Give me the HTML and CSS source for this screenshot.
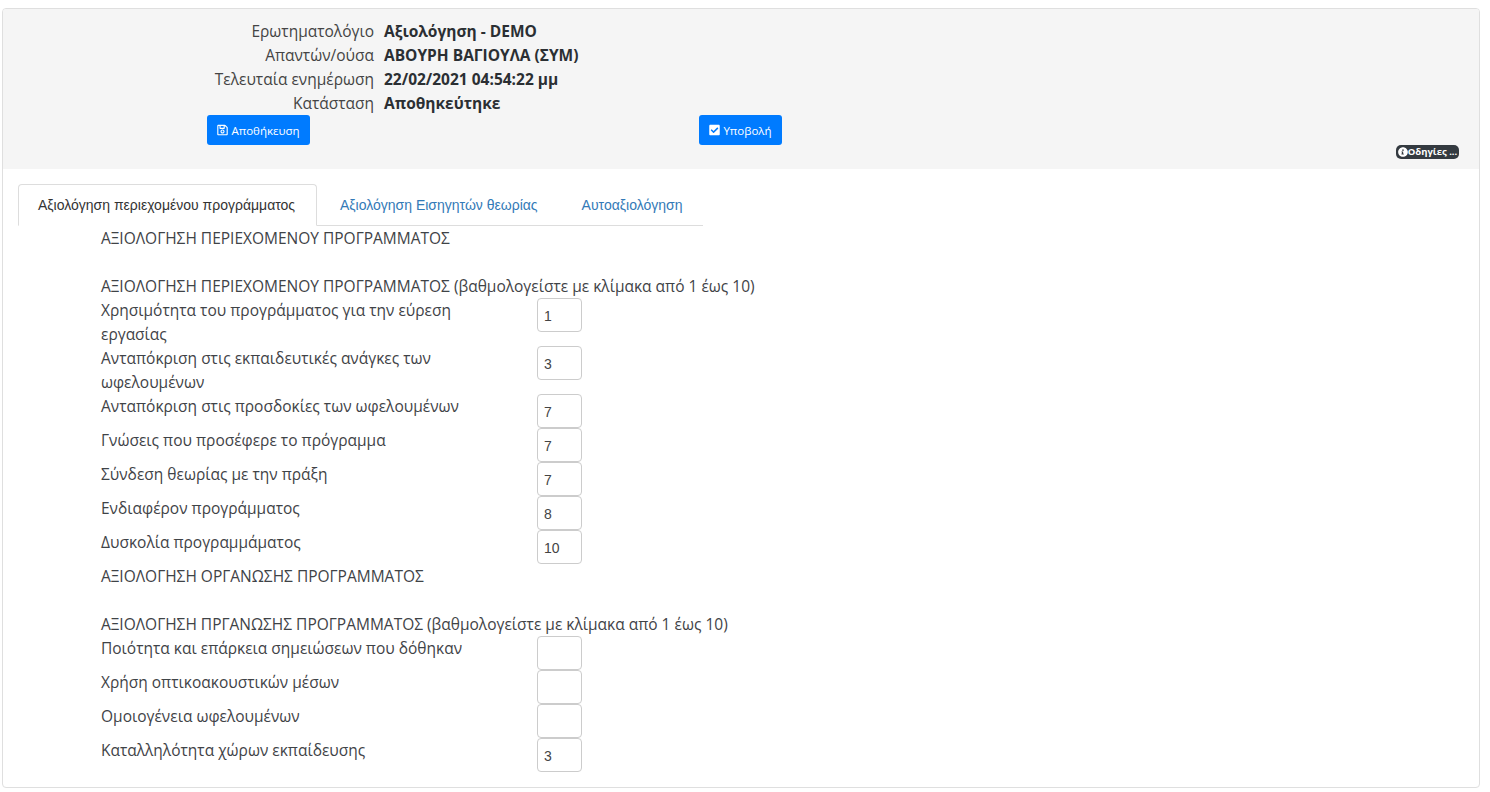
FILE: index.html
```html
<!DOCTYPE html>
<html lang="el">
<head>
<meta charset="utf-8">
<title>Αξιολόγηση</title>
<link rel="stylesheet" href="styles.css">
</head>
<body>
<div class="card">
  <header class="head">
    <dl class="info">
      <dt>Ερωτηματολόγιο</dt><dd>Αξιολόγηση - DEMO</dd>
      <dt>Απαντών/ούσα</dt><dd>ΑΒΟΥΡΗ ΒΑΓΙΟΥΛΑ (ΣΥΜ)</dd>
      <dt>Τελευταία ενημέρωση</dt><dd>22/02/2021 04:54:22 μμ</dd>
      <dt>Κατάσταση</dt><dd>Αποθηκεύτηκε</dd>
    </dl>
    <div class="actions">
      <button class="btn btn-save" type="button"><svg class="ico" viewBox="0 0 448 512"><path fill="currentColor" d="M433.941 129.941l-83.882-83.882A48 48 0 0 0 316.118 32H48C21.49 32 0 53.49 0 80v352c0 26.51 21.49 48 48 48h352c26.51 0 48-21.49 48-48V163.882a48 48 0 0 0-14.059-33.941zM272 80v80H144V80h128zm122 352H54a6 6 0 0 1-6-6V86a6 6 0 0 1 6-6h42v104c0 13.255 10.745 24 24 24h176c13.255 0 24-10.745 24-24V83.882l78.243 78.243a6 6 0 0 1 1.757 4.243V426a6 6 0 0 1-6 6zM224 232c-48.523 0-88 39.477-88 88s39.477 88 88 88 88-39.477 88-88-39.477-88-88-88zm0 128c-22.056 0-40-17.944-40-40s17.944-40 40-40 40 17.944 40 40-17.944 40-40 40z"/></svg>Αποθήκευση</button>
      <button class="btn btn-submit" type="button"><svg class="ico" viewBox="0 0 448 512"><path fill="currentColor" d="M400 480H48c-26.51 0-48-21.49-48-48V80c0-26.51 21.49-48 48-48h352c26.51 0 48 21.49 48 48v352c0 26.51-21.49 48-48 48zm-204.686-98.059l184-184c6.248-6.248 6.248-16.379 0-22.627l-22.627-22.627c-6.248-6.248-16.379-6.249-22.628 0L184 302.745l-70.059-70.059c-6.248-6.248-16.379-6.248-22.628 0l-22.627 22.627c-6.248 6.248-6.248 16.379 0 22.627l104 104c6.249 6.25 16.379 6.25 22.628.001z"/></svg>Υποβολή</button>
    </div>
    <div class="help"><span class="badge"><svg class="ico-i" viewBox="0 0 512 512"><path fill="currentColor" d="M256 8C119.043 8 8 119.083 8 256c0 136.997 111.043 248 248 248s248-111.003 248-248C504 119.083 392.957 8 256 8zm0 110c23.196 0 42 18.804 42 42s-18.804 42-42 42-42-18.804-42-42 18.804-42 42-42zm56 254c0 6.627-5.373 12-12 12h-112c-6.627 0-12-5.373-12-12v-24c0-6.627 5.373-12 12-12h12v-64h-12c-6.627 0-12-5.373-12-12v-24c0-6.627 5.373-12 12-12h64c6.627 0 12 5.373 12 12v100h12c6.627 0 12 5.373 12 12v24z"/></svg>Οδηγίες ...</span></div>
  </header>
  <div class="body">
    <nav class="tabs">
      <a class="tab tab-active">Αξιολόγηση περιεχομένου προγράμματος</a>
      <a class="tab tab-2">Αξιολόγηση Εισηγητών θεωρίας</a>
      <a class="tab tab-3">Αυτοαξιολόγηση</a>
    </nav>
    <section class="form">
      <p class="title">ΑΞΙΟΛΟΓΗΣΗ ΠΕΡΙΕΧΟΜΕΝΟΥ ΠΡΟΓΡΑΜΜΑΤΟΣ</p>
      <p class="title spaced">ΑΞΙΟΛΟΓΗΣΗ ΠΕΡΙΕΧΟΜΕΝΟΥ ΠΡΟΓΡΑΜΜΑΤΟΣ (βαθμολογείστε με κλίμακα από 1 έως 10)</p>
      <div class="row"><label class="lbl">Χρησιμότητα του προγράμματος για την εύρεση εργασίας</label><input class="num" value="1"></div>
      <div class="row"><label class="lbl">Ανταπόκριση στις εκπαιδευτικές ανάγκες των ωφελουμένων</label><input class="num" value="3"></div>
      <div class="row"><label class="lbl">Ανταπόκριση στις προσδοκίες των ωφελουμένων</label><input class="num" value="7"></div>
      <div class="row"><label class="lbl">Γνώσεις που προσέφερε το πρόγραμμα</label><input class="num" value="7"></div>
      <div class="row"><label class="lbl">Σύνδεση θεωρίας με την πράξη</label><input class="num" value="7"></div>
      <div class="row"><label class="lbl">Ενδιαφέρον προγράμματος</label><input class="num" value="8"></div>
      <div class="row"><label class="lbl">Δυσκολία προγραμμάματος</label><input class="num" value="10"></div>
      <p class="title">ΑΞΙΟΛΟΓΗΣΗ ΟΡΓΑΝΩΣΗΣ ΠΡΟΓΡΑΜΜΑΤΟΣ</p>
      <p class="title spaced">ΑΞΙΟΛΟΓΗΣΗ ΠΡΓΑΝΩΣΗΣ ΠΡΟΓΡΑΜΜΑΤΟΣ (βαθμολογείστε με κλίμακα από 1 έως 10)</p>
      <div class="row"><label class="lbl">Ποιότητα και επάρκεια σημειώσεων που δόθηκαν</label><input class="num" value=""></div>
      <div class="row"><label class="lbl">Χρήση οπτικοακουστικών μέσων</label><input class="num" value=""></div>
      <div class="row"><label class="lbl">Ομοιογένεια ωφελουμένων</label><input class="num" value=""></div>
      <div class="row"><label class="lbl">Καταλληλότητα χώρων εκπαίδευσης</label><input class="num" value="3"></div>
    </section>
  </div>
</div>
</body>
</html>
```
FILE: styles.css
```css
* { box-sizing: border-box; }
html, body { margin: 0; padding: 0; height: 100%; overflow: hidden; }
body {
  background: #fff;
  color: #3f4347;
  font-family: "Open Sans", "Noto Sans", "Liberation Sans", sans-serif;
  font-size: 15.5px;
  line-height: 24px;
  padding: 8px 10px 0 2px;
}
.card {
  height: 780px;
  border: 1px solid #dfdfdf;
  border-radius: 4px;
  overflow: hidden;
}
.head {
  height: 160px;
  background: #f5f5f5;
  padding-top: 10px;
}
.info {
  margin: 0;
  display: grid;
  grid-template-columns: 371px 1fr;
  column-gap: 10px;
}
.info dt { text-align: right; font-weight: 400; color: #444; }
.info dd { margin: 0; font-weight: 700; color: #2b2f33; }
.actions {
  display: flex;
  padding-left: 204px;
}
.btn {
  height: 30px;
  border: 0;
  border-radius: 3px;
  background: #007bff;
  color: #fff;
  font-family: "Open Sans", "Liberation Sans", sans-serif;
  font-size: 11.5px;
  display: flex;
  align-items: center;
  justify-content: center;
  padding: 0;
}
.btn-save { width: 103px; }
.btn-submit { width: 83px; margin-left: 389px; }
.ico { width: 11px; height: 12px; margin-right: 3px; }
.help { display: flex; justify-content: flex-end; padding-right: 20px; }
.badge {
  height: 14px;
  width: 63px;
  background: #343a40;
  color: #fff;
  border-radius: 5px;
  font-size: 9.5px;
  font-weight: 700;
  line-height: 14px;
  display: flex;
  align-items: center;
  justify-content: center;
  white-space: nowrap;
}
.ico-i { width: 10px; height: 10px; flex: none; }
.body { padding: 15px 15px 0; }
.tabs {
  display: flex;
  width: 685px;
  height: 42px;
  border-bottom: 1px solid #ddd;
  font-family: "Liberation Sans", Arial, sans-serif;
  font-size: 14px;
  line-height: 42px;
}
.tab { display: block; color: #337ab7; white-space: nowrap; }
.tab-active {
  width: 299px;
  height: 42px;
  padding-left: 19px;
  color: #333;
  background: #fff;
  border: 1px solid #ddd;
  border-bottom-color: #fff;
  border-radius: 4px 4px 0 0;
  line-height: 40px;
}
.tab-2 { margin-left: 23px; }
.tab-3 { margin-left: 44px; }
.form { padding-left: 83px; }
.title { margin: 0; height: 24px; white-space: nowrap; }
.spaced { margin-top: 24px; }
.row { display: flex; }
.lbl { width: 436px; padding-right: 60px; }
.num {
  width: 45px;
  height: 34px;
  border: 1px solid #ccc;
  border-radius: 4px;
  padding: 1px 6px 0;
  font-family: "Liberation Sans", Arial, sans-serif;
  font-size: 14px;
  color: #444;
  background: #fff;
}
```
